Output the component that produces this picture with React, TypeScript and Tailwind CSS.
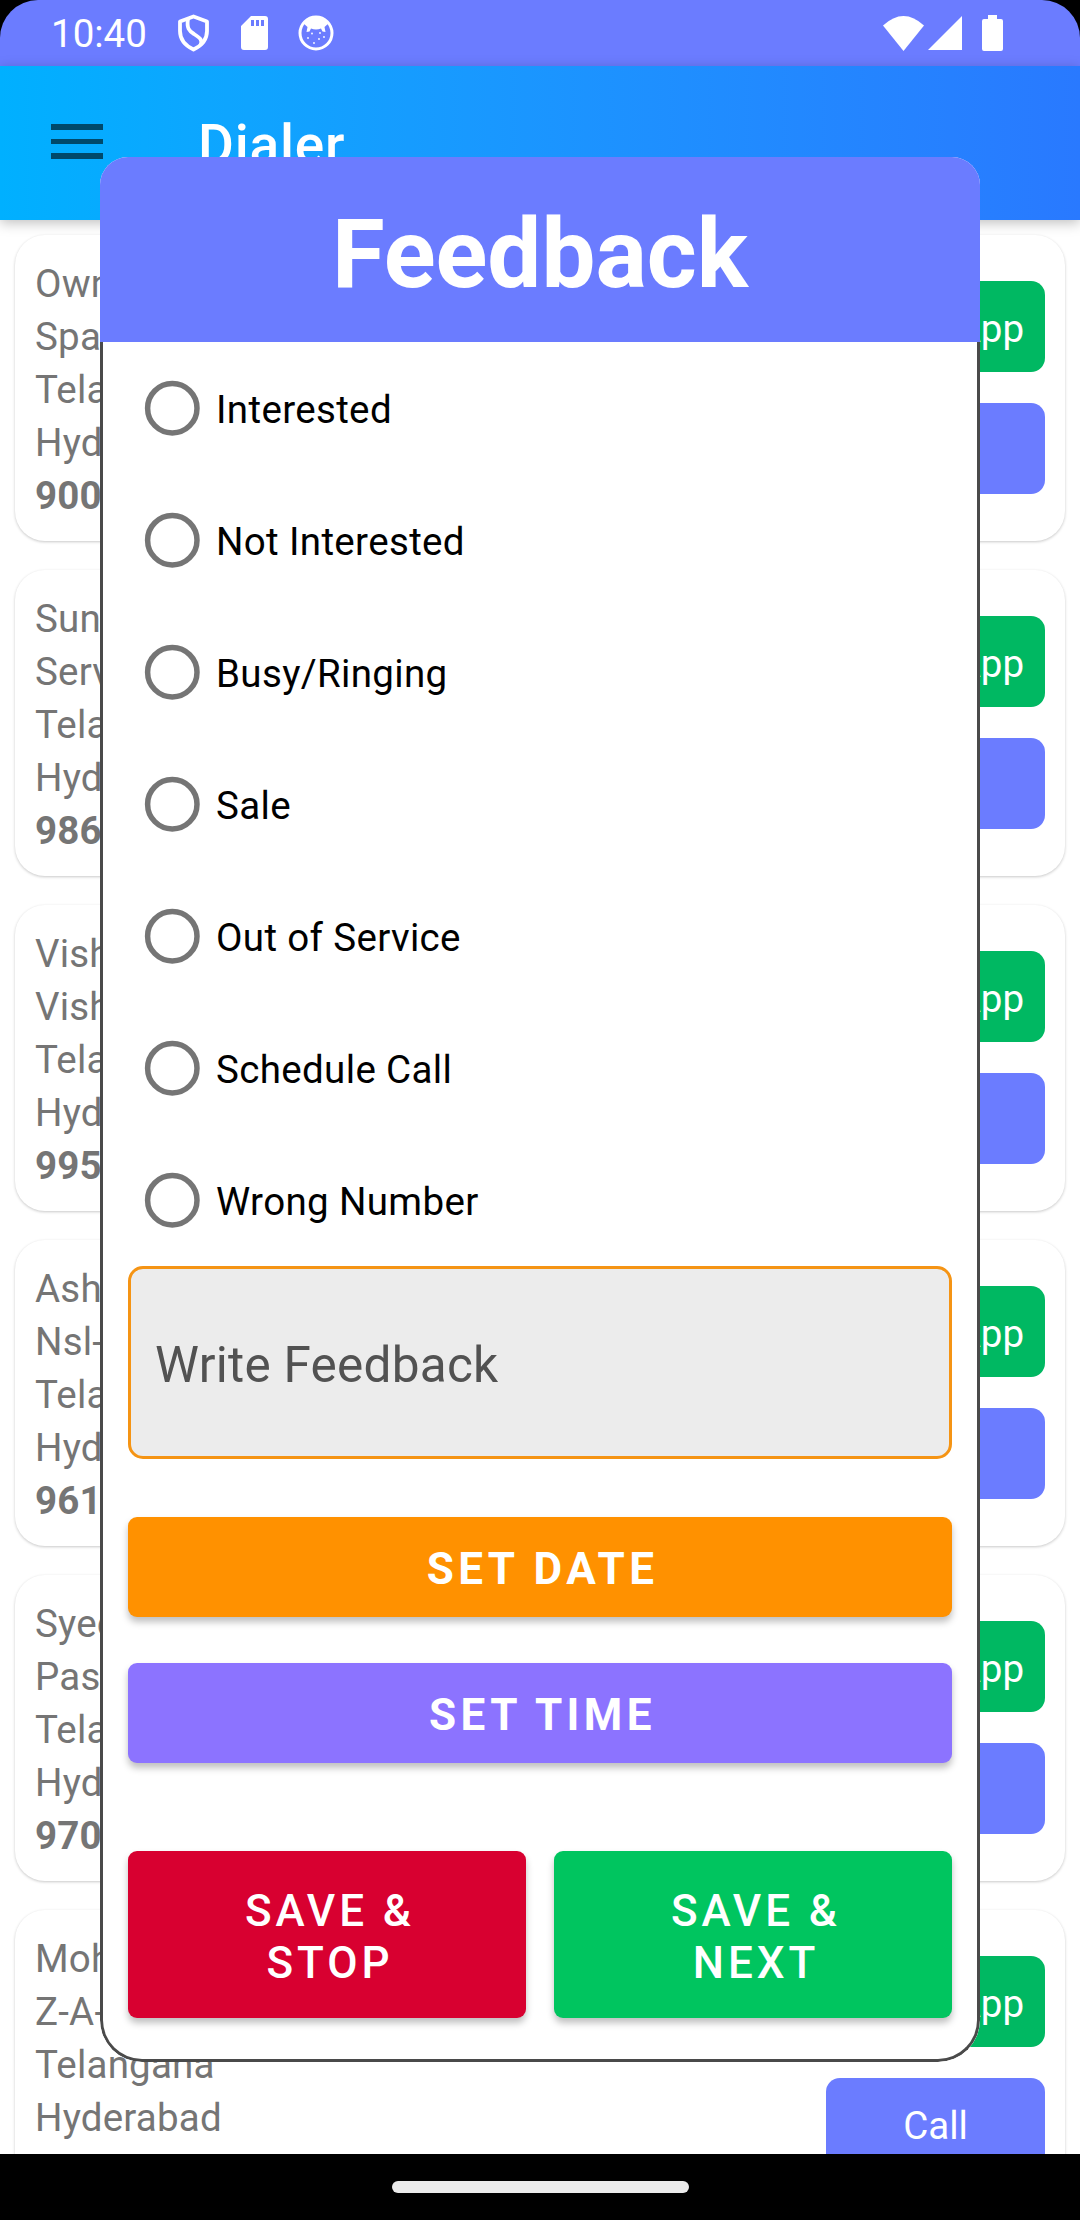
import React from "react";

const leads = [
  { name: "Owner", company: "Space", phone: "9000" },
  { name: "Sunil", company: "Services", phone: "9866" },
  { name: "Vishal", company: "Vishal", phone: "9951" },
  { name: "Ashok", company: "Nsl-A", phone: "9618" },
  { name: "Syed", company: "Passi", phone: "9700" },
  { name: "Moha", company: "Z-A-", phone: "9700" },
];

const options = [
  "Interested",
  "Not Interested",
  "Busy/Ringing",
  "Sale",
  "Out of Service",
  "Schedule Call",
  "Wrong Number",
];

const StatusBar = () => {
  return (
    <div className="bg-black">
      <div className="flex h-[66px] items-center rounded-t-[38px] bg-[#6b7cff] pl-[51px] text-white">
        <span className="w-[96px] pt-[3px] text-[38.5px] leading-none">10:40</span>
        <svg className="ml-[30px] h-[38px] w-[33px]" viewBox="0 0 33 38" fill="none" stroke="#fff" strokeWidth="3.8">
          <path d="M16.5 2.5L30 7.5V17C30 26 25 31.5 16.5 35.5C8 31.5 3 26 3 17V7.5Z" strokeLinejoin="round" />
          <path d="M11 5C9.5 14 12 17 17 20C23 24 26 26 23.5 31" />
        </svg>
        <svg className="ml-[31px] h-[34px] w-[27px]" viewBox="0 0 27 34">
          <path
            fill="#fff"
            fillRule="evenodd"
            d="M10 0H24Q27 0 27 3V31Q27 34 24 34H3Q0 34 0 31V10ZM10 4V10H13V4ZM15 4V10H18V4ZM20 4V10H23V4Z"
          />
        </svg>
        <svg className="ml-[30px] h-[36px] w-[36px]" viewBox="0 0 36 36">
          <circle cx="18" cy="18" r="16" fill="none" stroke="#fff" strokeWidth="3" />
          <path fill="#fff" d="M5 8A16 16 0 0 1 31 8L26.5 12L27.5 17L24.5 16.5L23 13.5Q18 15.5 13 13.5L11.5 16.5L8.5 17L9.5 12Z" />
          <g fill="#fff">
            <circle cx="14" cy="18.5" r="0.9" />
            <circle cx="22" cy="18" r="0.9" />
            <circle cx="10" cy="23" r="0.9" />
            <circle cx="26" cy="22" r="0.9" />
            <circle cx="21" cy="24" r="0.9" />
            <circle cx="16" cy="28" r="0.9" />
          </g>
        </svg>
        <svg className="ml-auto h-[35px] w-[41px]" viewBox="0 0 41 35">
          <path fill="#fff" d="M20.5 35L0 9.5Q20.5 -9.5 41 9.5Z" />
        </svg>
        <svg className="ml-[4px] h-[34px] w-[34px]" viewBox="0 0 34 34">
          <path fill="#fff" d="M34 0V34H0Z" />
        </svg>
        <svg className="mr-[77px] ml-[20px] h-[36px] w-[21px]" viewBox="0 0 21 36">
          <path
            fill="#fff"
            d="M6 0H15V4H19Q21 4 21 6V34Q21 36 19 36H2Q0 36 0 34V6Q0 4 2 4H6Z"
          />
        </svg>
      </div>
    </div>
  );
};

const LeadCard = ({ name, company, phone }: { name: string; company: string; phone: string }) => {
  return (
    <div className="flex h-[306px] shrink-0 justify-between rounded-[30px] bg-white px-[20px] shadow-[0_1px_3px_rgba(0,0,0,0.22)]">
      <div className="pt-[22px] text-[38.5px] leading-[53px] tracking-[0.2px] text-[#757575]">
        <p>{name}</p>
        <p>{company}</p>
        <p>Telangana</p>
        <p>Hyderabad</p>
        <p className="font-bold">{phone}</p>
      </div>
      <div className="flex w-[219px] flex-col gap-[31px] pt-[46px] text-center text-[38.5px] leading-[95px] text-white">
        <button className="h-[91px] rounded-[14px] bg-[#00b862]">WhatsApp</button>
        <button className="h-[91px] rounded-[14px] bg-[#6b7cff]">Call</button>
      </div>
    </div>
  );
};

const FeedbackDialog = () => {
  return (
    <div className="absolute top-[157px] left-[100px] flex h-[1905px] w-[880px] flex-col overflow-hidden rounded-t-[28px] rounded-b-[42px] bg-white">
      <h2 className="h-[185px] shrink-0 bg-[#6b7cff] pt-[8px] text-center text-[96px] leading-[179px] font-bold text-white">
        Feedback
      </h2>
      <div className="flex flex-1 flex-col rounded-b-[42px] border-x-[3px] border-b-[3px] border-[#4a4a4a] px-[25px]">
        <div className="flex flex-col">
          {options.map((option) => (
            <label
              key={option}
              className="flex h-[132px] items-center pl-[16px] text-[38.5px] tracking-[0.35px] text-black"
            >
              <svg className="h-[56px] w-[56px]" viewBox="0 0 56 56">
                <circle cx="28.3" cy="28.2" r="24.7" fill="none" stroke="#757575" strokeWidth="5.5" />
              </svg>
              <span className="pt-[3px] pl-[16px]">{option}</span>
            </label>
          ))}
        </div>
        <div className="flex h-[193px] items-center rounded-[15px] border-[3px] border-[#f59414] bg-[#ececec] pt-[5px] pl-[24px] text-[49.5px] tracking-[0.25px] text-[#525252]">
          Write Feedback
        </div>
        <button className="mt-[58px] h-[100px] rounded-[9px] bg-[#ff9100] pt-[3px] pl-[5px] text-[44px] font-bold tracking-[4.4px] text-white shadow-[0_5px_7px_rgba(0,0,0,0.25)]">
          SET DATE
        </button>
        <button className="mt-[46px] h-[100px] rounded-[9px] bg-[#8c73ff] pt-[3px] pl-[5px] text-[44px] font-bold tracking-[4.4px] text-white shadow-[0_5px_7px_rgba(0,0,0,0.25)]">
          SET TIME
        </button>
        <div className="mt-[88px] grid grid-cols-2 gap-[28px] text-[44px] leading-[52px] font-medium tracking-[3.93px] text-white">
          <button className="h-[167px] rounded-[9px] bg-[#d80030] pt-[4px] pl-[6px] shadow-[0_5px_7px_rgba(0,0,0,0.25)]">
            SAVE &amp;
            <br />
            STOP
          </button>
          <button className="h-[167px] rounded-[9px] bg-[#00c55f] pt-[4px] pl-[6px] shadow-[0_5px_7px_rgba(0,0,0,0.25)]">
            SAVE &amp;
            <br />
            NEXT
          </button>
        </div>
      </div>
    </div>
  );
};

export default function App() {
  return (
    <div className="relative flex h-[2220px] w-[1080px] flex-col overflow-hidden bg-white font-[Roboto,sans-serif]">
      <StatusBar />
      <header className="flex h-[154px] shrink-0 items-center bg-linear-to-r from-[#00b0ff] to-[#2979ff] pl-[51px] shadow-[0_3px_12px_rgba(0,0,0,0.25)]">
        <div className="flex w-[52px] flex-col gap-[9px] pb-[3px]">
          <span className="h-[5.5px] bg-[#00496b]" />
          <span className="h-[5.5px] bg-[#00496b]" />
          <span className="h-[5.5px] bg-[#00496b]" />
        </div>
        <h1 className="pt-[5px] pl-[95px] text-[55px] font-medium tracking-[0.8px] text-white">Dialer</h1>
      </header>
      <main className="flex min-h-0 flex-1 flex-col gap-[29px] overflow-hidden px-[15px] pt-[15px]">
        {leads.map((lead) => (
          <LeadCard key={lead.name} {...lead} />
        ))}
      </main>
      <footer className="flex h-[66px] shrink-0 justify-center bg-black pt-[27px]">
        <div className="h-[12px] w-[297px] rounded-full bg-[#ebebeb]" />
      </footer>
      <FeedbackDialog />
    </div>
  );
}
